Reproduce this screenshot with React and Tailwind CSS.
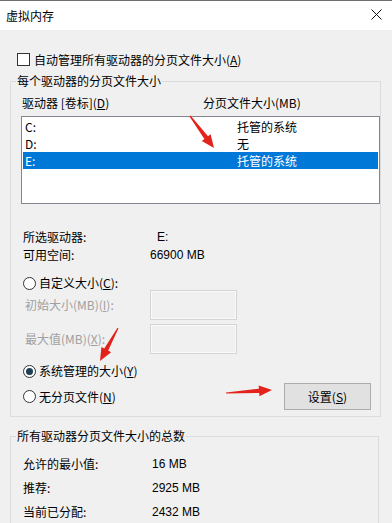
import React from 'react';

// 红色箭头：由尾到尖，渐粗的杆 + 三角箭头
function arrowPoints([tx, ty], [hx, hy]) {
  const dx = hx - tx;
  const dy = hy - ty;
  const len = Math.hypot(dx, dy);
  const ux = dx / len;
  const uy = dy / len;
  const px = -uy;
  const py = ux;
  const headLen = 13;
  const bx = hx - ux * headLen;
  const by = hy - uy * headLen;
  const pt = (x, y, k) => `${(x + px * k).toFixed(1)},${(y + py * k).toFixed(1)}`;
  return [
    pt(tx, ty, 0.6),
    pt(bx, by, 2.2),
    pt(bx, by, 5.5),
    `${hx},${hy}`,
    pt(bx, by, -5.5),
    pt(bx, by, -2.2),
    pt(tx, ty, -0.6),
  ].join(' ');
}

const ARROWS = [
  [[190, 116], [214, 148]],
  [[118, 328], [100, 361]],
  [[226, 393], [272, 390]],
];

const DRIVES = [
  { id: 'C', name: 'C:', size: '托管的系统' },
  { id: 'D', name: 'D:', size: '无' },
  { id: 'E', name: 'E:', size: '托管的系统', selected: true },
];

function Radio({ checked }) {
  return (
    <span className="w-[13px] h-[13px] rounded-full border border-[#333] bg-white flex items-center justify-center shrink-0">
      {checked && <span className="w-[7px] h-[7px] rounded-full bg-[#1f3f55]" />}
    </span>
  );
}

function DisabledInput() {
  return <div className="w-[87px] h-[30px] border border-[#d4d4d4] bg-[#f0f0f0] shadow-[inset_0_0_0_1px_#fafafa]" />;
}

export default function App() {
  return (
    <div className="relative w-[392px] h-[523px] overflow-hidden bg-[#f0f0f0] text-[12px] text-black font-['Microsoft_YaHei','Noto_Sans_CJK_SC',sans-serif]">
      {/* 标题栏 */}
      <div className="h-[1px] bg-[#6e6e6e]" />
      <div className="h-[29px] bg-white flex items-center justify-between pl-[6px] pr-[10px]">
        <span className="leading-[14px]">虚拟内存</span>
        <svg width="11" height="11" viewBox="0 0 11 11" className="mb-[2px]">
          <path d="M0.5 0.5 L10.5 10.5 M10.5 0.5 L0.5 10.5" stroke="#111" strokeWidth="1" />
        </svg>
      </div>

      {/* 自动管理 */}
      <div className="mt-[23px] ml-[17px] h-[13px] flex items-center gap-[4px]">
        <span className="w-[13px] h-[13px] border border-[#333] bg-white shrink-0" />
        <span className="leading-[14px]">自动管理所有驱动器的分页文件大小(<u>A</u>)</span>
      </div>

      {/* 每个驱动器 */}
      <fieldset className="mt-[8px] ml-[10px] w-[369px] border border-[#dcdcdc] pb-[6px]">
        <legend className="ml-[5px] px-[1px] leading-[14px]">每个驱动器的分页文件大小</legend>

        <div className="mt-[8px] ml-[11px] flex leading-[14px]">
          <span className="w-[181px]">驱动器 [卷标](<u>D</u>)</span>
          <span>分页文件大小(MB)</span>
        </div>

        <div className="mt-[6px] ml-[10px] w-[359px] h-[88px] border border-[#828790] bg-white p-[1px]">
          {DRIVES.map(d => (
            <div
              key={d.id}
              className={`h-[17px] flex items-center pl-[2px] leading-[14px] ${
                d.selected ? 'bg-[#0078d7] text-white' : ''
              }`}
            >
              <span className="w-[212px]">{d.name}</span>
              <span>{d.size}</span>
            </div>
          ))}
        </div>

        <div className="mt-[24px] ml-[12px] leading-[18px]">
          <div className="flex">
            <span className="w-[134px]">所选驱动器:</span>
            <span className="font-['Segoe_UI','Liberation_Sans',sans-serif]">E:</span>
          </div>
          <div className="flex">
            <span className="w-[127px]">可用空间:</span>
            <span className="font-['Segoe_UI','Liberation_Sans',sans-serif]">66900 MB</span>
          </div>
        </div>

        <div className="mt-[12px] ml-[12px] h-[14px] flex items-center gap-[3px]">
          <Radio />
          <span className="leading-[14px]">自定义大小(<u>C</u>):</span>
        </div>

        <div className="ml-[14px] h-[30px] flex items-center text-[#a0a0a0]">
          <span className="w-[125px] leading-[14px]">初始大小(MB)(<u>I</u>):</span>
          <DisabledInput />
        </div>
        <div className="mt-[4px] ml-[14px] h-[30px] flex items-center text-[#a0a0a0]">
          <span className="w-[125px] leading-[14px]">最大值(MB)(<u>X</u>):</span>
          <DisabledInput />
        </div>

        <div className="mt-[10px] ml-[12px] h-[14px] flex items-center gap-[3px]">
          <Radio checked />
          <span className="leading-[14px]">系统管理的大小(<u>Y</u>)</span>
        </div>

        <div className="mt-[5px] ml-[12px] mr-[9px] h-[27px] flex items-center justify-between">
          <div className="flex items-center gap-[3px]">
            <Radio />
            <span className="leading-[14px]">无分页文件(<u>N</u>)</span>
          </div>
          <button className="w-[87px] h-[27px] border border-[#adadad] bg-[#e1e1e1] leading-[14px]">
            设置(<u>S</u>)
          </button>
        </div>
      </fieldset>

      {/* 总数 */}
      <fieldset className="mt-[12px] ml-[10px] w-[369px] border border-[#dcdcdc] pb-[20px]">
        <legend className="ml-[5px] px-[1px] leading-[14px]">所有驱动器分页文件大小的总数</legend>
        <div className="mt-[9px] ml-[12px] leading-[24px]">
          {[
            ['允许的最小值:', '16 MB'],
            ['推荐:', '2925 MB'],
            ['当前已分配:', '2432 MB'],
          ].map(([k, v]) => (
            <div key={k} className="flex">
              <span className="w-[129px]">{k}</span>
              <span className="font-['Segoe_UI','Liberation_Sans',sans-serif]">{v}</span>
            </div>
          ))}
        </div>
      </fieldset>

      {/* 标注箭头 */}
      <svg className="absolute inset-0 pointer-events-none" width="392" height="523">
        {ARROWS.map(([t, h], i) => (
          <polygon key={i} points={arrowPoints(t, h)} fill="#e3231b" />
        ))}
      </svg>
    </div>
  );
}
